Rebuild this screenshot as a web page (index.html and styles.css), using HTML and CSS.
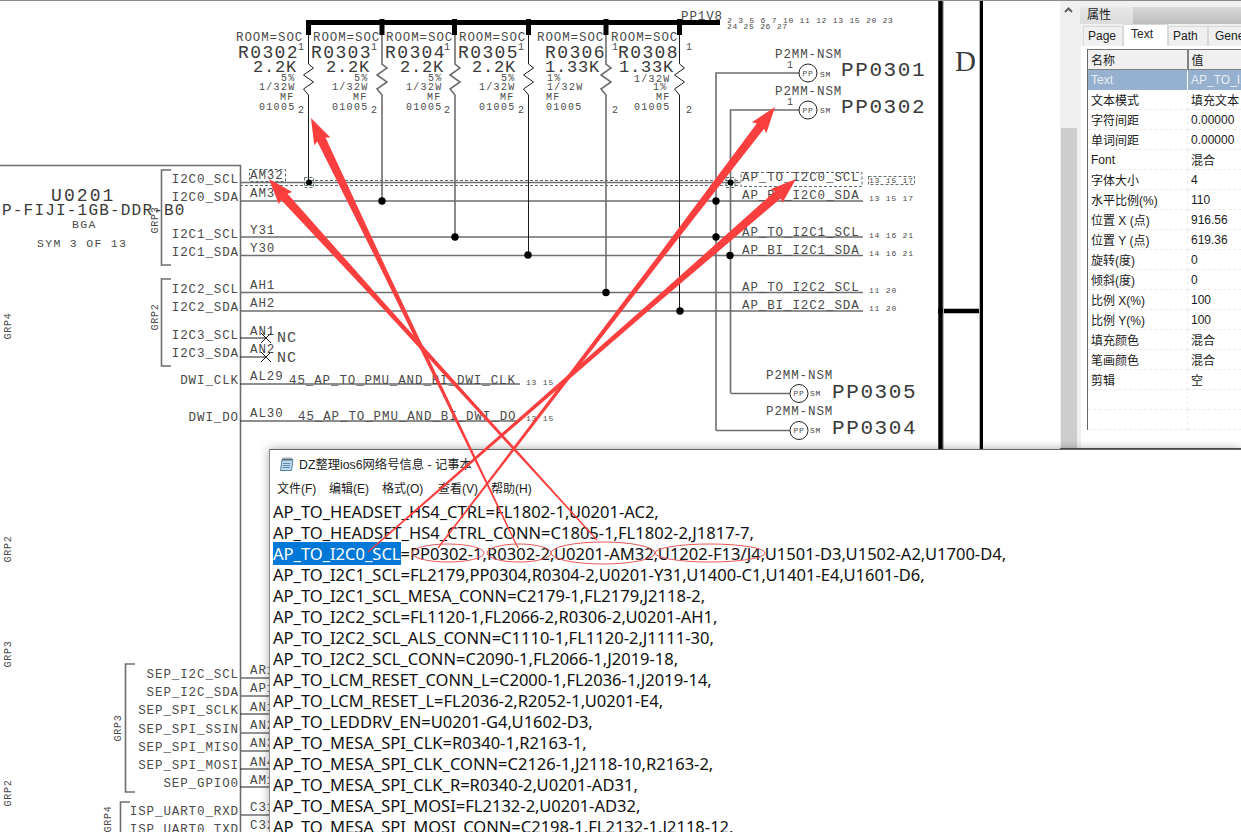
FILE: index.html
```html
<!DOCTYPE html>
<html lang="zh">
<head>
<meta charset="utf-8">
<title>DZ整理ios6网络号信息 - 记事本</title>
<link rel="stylesheet" href="styles.css">
</head>
<body>
<div class="page">
  <svg class="schematic" width="1060" height="832" viewBox="0 0 1060 832">
    <!-- symbol outline -->
    <path class="wire-g" d="M0 165.500H240.500V832"/>
    <path class="wire-g" d="M171 170H161.500V265H171M171 279H161.500V366H171M135 664H125.500V792H135M130 802H120.500V832"/>
    <!-- horizontal nets -->
    <path class="wire-g" d="M240 182.500H740M240 201H863M240 237H863M240 255.500H863M240 292.500H863M240 311H863"/>
    <path class="wire-k" d="M240 338H266M240 357H266M240 384H520M240 421H520"/>
    <path class="wire-g" d="M240 678H270M240 696H270M240 733H270M240 751H270M240 815H270"/>
    <path class="wire-k" d="M240 714H270M240 769H270M240 787H270"/>
    <path class="wire-k" d="M261 333l10 10m0-10l-10 10M261 352l10 10m0-10l-10 10"/>
    <!-- power bus -->
    <path class="bus" d="M306 22.500H720"/>
    <path class="stub" d="M308.500 20V35M382 19V35M454.500 19V35M528.500 19V35M606 19V35M679.500 19V35"/>
    <!-- resistors -->
    <path class="wire-k" d="M308.500 35V64l5 4-10 7 10 7-10 7 5 6V182"/>
    <path class="wire-g" d="M382 35V64l5 4-10 7 10 7-10 7 5 6V201"/>
    <path class="wire-g" d="M455 35V64l5 4-10 7 10 7-10 7 5 6V237"/>
    <path class="wire-k" d="M528.500 35V64l5 4-10 7 10 7-10 7 5 6V255"/>
    <path class="wire-g" d="M606 35V64l5 4-10 7 10 7-10 7 5 6V292"/>
    <path class="wire-k" d="M679.500 35V64l5 4-10 7 10 7-10 7 5 6V311"/>
    <!-- test point wiring -->
    <path class="wire-g" d="M716 430.500V73H799M730.500 393V110H799M730.500 393.500H790M716 430.500H790"/>
    <!-- junctions -->
    <circle class="dot" cx="382" cy="201" r="3.700"/>
    <circle class="dot" cx="455" cy="237" r="3.700"/>
    <circle class="dot" cx="528" cy="255" r="3.700"/>
    <circle class="dot" cx="606" cy="292.500" r="3.700"/>
    <circle class="dot" cx="680" cy="311" r="3.700"/>
    <circle class="dot" cx="716" cy="201" r="3.700"/>
    <circle class="dot" cx="716" cy="237" r="3.700"/>
    <circle class="dot" cx="730" cy="255.500" r="3.700"/>
    <!-- frame lines -->
    <path class="frame-a" d="M940.500 0V449M938 311H982"/>
    <path class="frame-b" d="M981.500 0V449"/>
    <path class="frame-s" d="M943.500 0V449M979.500 0V449"/>

    <!-- selection marks -->
    <rect class="sel" x="249.500" y="169.500" width="36" height="12"/>
    <path class="sel" d="M240 185.500H740M310 180.500H740"/>
    <rect class="sel" x="741" y="172.500" width="121" height="14"/>
    <rect class="sel" x="868.500" y="176.500" width="46" height="8"/>
    <rect class="sel" x="304.500" y="177.500" width="9" height="10"/>
    <rect class="sel" x="726" y="177.500" width="9" height="10"/>
    <circle class="dot" cx="309" cy="182.500" r="3"/>
    <circle class="dot" cx="730.500" cy="182.500" r="3"/>

    <!-- resistor text -->
    <g class="t t-pin">
      <text x="236" y="41">ROOM=SOC</text><text x="313" y="41">ROOM=SOC</text><text x="386" y="41">ROOM=SOC</text>
      <text x="459" y="41">ROOM=SOC</text><text x="537" y="41">ROOM=SOC</text><text x="611" y="41">ROOM=SOC</text>
    </g>
    <g class="t t-ref">
      <text x="238" y="58">R0302</text><text x="311" y="58">R0303</text><text x="385" y="58">R0304</text>
      <text x="458" y="58">R0305</text><text x="545" y="58">R0306</text><text x="618" y="58">R0308</text>
    </g>
    <g class="t t-val">
      <text x="253" y="72">2.2K</text><text x="326" y="72">2.2K</text><text x="400" y="72">2.2K</text>
      <text x="472" y="72">2.2K</text><text x="545" y="72">1.33K</text><text x="619" y="72">1.33K</text>
    </g>
    <g class="t t-sm">
      <text x="281" y="81">5%</text><text x="354" y="81">5%</text><text x="428" y="81">5%</text><text x="501" y="81">5%</text><text x="547" y="81">1%</text><text x="634" y="82">1/32W</text>
      <text x="259" y="90">1/32W</text><text x="332" y="90">1/32W</text><text x="406" y="90">1/32W</text><text x="479" y="90">1/32W</text><text x="547" y="90">1/32W</text><text x="653" y="90">1%</text>
      <text x="280" y="100">MF</text><text x="353" y="100">MF</text><text x="427" y="100">MF</text><text x="500" y="100">MF</text><text x="546" y="100">MF</text><text x="656" y="100">MF</text>
      <text x="259" y="110">01005</text><text x="332" y="110">01005</text><text x="406" y="110">01005</text><text x="479" y="110">01005</text><text x="546" y="110">01005</text><text x="634" y="110">01005</text>
      <text x="298" y="50">1</text><text x="371" y="50">1</text><text x="444" y="50">1</text><text x="518" y="50">1</text><text x="612" y="50">1</text><text x="686" y="50">1</text>
      <text x="298" y="113">2</text><text x="371" y="113">2</text><text x="444" y="113">2</text><text x="518" y="113">2</text><text x="612" y="113">2</text><text x="686" y="113">2</text>
    </g>
    <text class="t t-pin" x="681" y="20">PP1V8</text>
    <text class="t t-xs t-rail" x="727" y="23">2 3 5 6 7 10 11 12 13 15 20 23</text>
    <text class="t t-xs t-rail" x="727" y="29">24 25 26 27</text>

    <!-- symbol text -->
    <text class="t t-u" x="51" y="201">U0201</text>
    <text class="t t-part" x="2" y="215">P-FIJI-1GB-DDR-B0</text>
    <text class="t t-note" x="72" y="228">BGA</text>
    <text class="t t-note" x="37" y="247">SYM 3 OF 13</text>

    <g class="t t-grp">
      <text transform="translate(158 220) rotate(-90)">GRP3</text>
      <text transform="translate(158 317) rotate(-90)">GRP2</text>
      <text transform="translate(11 326) rotate(-90)">GRP4</text>
      <text transform="translate(11 549) rotate(-90)">GRP2</text>
      <text transform="translate(11 654) rotate(-90)">GRP3</text>
      <text transform="translate(11 793) rotate(-90)">GRP2</text>
      <text transform="translate(121 728) rotate(-90)">GRP3</text>
      <text transform="translate(111 819) rotate(-90)">GRP4</text>
    </g>

    <g class="t t-pin t-end">
      <text x="239" y="183">I2C0_SCL</text><text x="239" y="201">I2C0_SDA</text>
      <text x="239" y="238">I2C1_SCL</text><text x="239" y="256">I2C1_SDA</text>
      <text x="239" y="293">I2C2_SCL</text><text x="239" y="311">I2C2_SDA</text>
      <text x="239" y="339">I2C3_SCL</text><text x="239" y="357">I2C3_SDA</text>
      <text x="239" y="384">DWI_CLK</text><text x="239" y="421">DWI_DO</text>
      <text x="239" y="678">SEP_I2C_SCL</text><text x="239" y="696">SEP_I2C_SDA</text>
      <text x="239" y="714">SEP_SPI_SCLK</text><text x="239" y="733">SEP_SPI_SSIN</text>
      <text x="239" y="751">SEP_SPI_MISO</text><text x="239" y="769">SEP_SPI_MOSI</text>
      <text x="239" y="787">SEP_GPIO0</text>
      <text x="239" y="815">ISP_UART0_RXD</text><text x="239" y="833">ISP_UART0_TXD</text>
    </g>
    <g class="t t-pin">
      <text x="250" y="179">AM32</text><text x="250" y="197">AM31</text>
      <text x="250" y="234">Y31</text><text x="250" y="252">Y30</text>
      <text x="250" y="289">AH1</text><text x="250" y="307">AH2</text>
      <text x="250" y="335">AN1</text><text x="250" y="353">AN2</text>
      <text x="250" y="380">AL29</text><text x="250" y="417">AL30</text>
      <text x="250" y="674">AR1</text><text x="250" y="692">AP1</text><text x="250" y="711">AN1</text>
      <text x="250" y="729">AN2</text><text x="250" y="747">AN3</text><text x="250" y="766">AN4</text>
      <text x="250" y="784">AM1</text><text x="250" y="811">C31</text><text x="250" y="829">C32</text>
      <text x="289" y="384">45_AP_TO_PMU_AND_BI_DWI_CLK</text>
      <text x="298" y="420">45_AP_TO_PMU_AND_BI_DWI_DO</text>
      <text x="742" y="181">AP_TO_I2C0_SCL</text><text x="742" y="199">AP_BI_I2C0_SDA</text>
      <text x="742" y="236">AP_TO_I2C1_SCL</text><text x="742" y="254">AP_BI_I2C1_SDA</text>
      <text x="742" y="291">AP_TO_I2C2_SCL</text><text x="742" y="309">AP_BI_I2C2_SDA</text>
      <text x="775" y="58">P2MM-NSM</text><text x="775" y="95">P2MM-NSM</text>
      <text x="766" y="379">P2MM-NSM</text><text x="766" y="415">P2MM-NSM</text>
    </g>
    <g class="t t-nc"><text x="277" y="342">NC</text><text x="277" y="362">NC</text></g>
    <g class="t t-xs">
      <text x="869" y="183">13 15 17</text><text x="869" y="201">13 15 17</text>
      <text x="869" y="238">14 16 21</text><text x="869" y="256">14 16 21</text>
      <text x="869" y="293">11 20</text><text x="869" y="311">11 20</text>
      <text x="526" y="385">13 15</text><text x="526" y="421">13 15</text>
      <text x="820" y="77">SM</text><text x="820" y="113">SM</text><text x="810" y="396">SM</text><text x="810" y="433">SM</text>
    </g>
    <g class="t t-sm"><text x="787" y="68">1</text><text x="787" y="105">1</text></g>

    <!-- test points -->
    <g class="tp">
      <circle cx="808" cy="73" r="9"/><circle cx="808" cy="110" r="9"/><circle cx="799" cy="393.500" r="9"/><circle cx="799" cy="430.500" r="9"/>
    </g>
    <g class="t t-xs t-mid">
      <text x="808" y="76">PP</text><text x="808" y="113">PP</text><text x="799" y="396">PP</text><text x="799" y="433">PP</text>
    </g>
    <g class="t t-pp">
      <text x="841" y="76">PP0301</text><text x="841" y="113">PP0302</text>
      <text x="832" y="398">PP0305</text><text x="832" y="434">PP0304</text>
    </g>
    <text class="t-zone" x="955" y="71">D</text>
  </svg>

  <aside class="panel">
    <div class="scrollbar">
      <div class="scroll-track"><svg class="scroll-arrow" width="9" height="6" viewBox="0 0 9 6"><path d="M1 5L4.500 1.500 8 5"/></svg></div>
      <div class="scroll-thumb"></div>
    </div>
    <div class="props">
      <div class="props-title"><span class="props-label">属性</span></div>
      <div class="tabs">
        <span class="tab">Page</span>
        <span class="tab tab-active">Text</span>
        <span class="tab">Path</span>
        <span class="tab tab-last">General</span>
      </div>
      <div class="props-body">
        <table class="grid">
          <thead><tr><th>名称</th><th>值</th></tr></thead>
          <tbody>
            <tr class="row-sel"><td>Text</td><td>AP_TO_I2C0_SCL</td></tr>
            <tr><td>文本模式</td><td>填充文本</td></tr>
            <tr><td>字符间距</td><td>0.00000</td></tr>
            <tr><td>单词间距</td><td>0.00000</td></tr>
            <tr><td>Font</td><td>混合</td></tr>
            <tr><td>字体大小</td><td>4</td></tr>
            <tr><td>水平比例(%)</td><td>110</td></tr>
            <tr><td>位置 X (点)</td><td>916.56</td></tr>
            <tr><td>位置 Y (点)</td><td>619.36</td></tr>
            <tr><td>旋转(度)</td><td>0</td></tr>
            <tr><td>倾斜(度)</td><td>0</td></tr>
            <tr><td>比例 X(%)</td><td>100</td></tr>
            <tr><td>比例 Y(%)</td><td>100</td></tr>
            <tr><td>填充颜色</td><td>混合</td></tr>
            <tr><td>笔画颜色</td><td>混合</td></tr>
            <tr><td>剪辑</td><td>空</td></tr>
            <tr><td></td><td></td></tr>
            <tr><td></td><td></td></tr>
          </tbody>
        </table>
      </div>
    </div>
  </aside>

  <section class="notepad">
    <header class="np-title">
      <svg class="np-icon" width="16" height="16" viewBox="0 0 16 16">
        <path class="np-icon-page" d="M3 3.500H14L12.500 14.500H1.500Z"/>
        <path class="np-icon-ring" d="M4 1.500V5M6 1.500V5M8 1.500V5M10 1.500V5M12 1.500V5"/>
        <path class="np-icon-line" d="M4 7.500H11.500M3.700 9.500H11.200M3.400 11.500H11"/>
      </svg>
      <span>DZ整理ios6网络号信息 - 记事本</span>
    </header>
    <nav class="np-menu">
      <span>文件(F)</span><span>编辑(E)</span><span>格式(O)</span><span>查看(V)</span><span>帮助(H)</span>
    </nav>
    <div class="np-text">
      <div>AP_TO_HEADSET_HS4_CTRL=FL1802-1,U0201-AC2,</div>
      <div>AP_TO_HEADSET_HS4_CTRL_CONN=C1805-1,FL1802-2,J1817-7,</div>
      <div><span class="np-sel">AP_TO_I2C0_SCL</span>=PP0302-1,R0302-2,U0201-AM32,U1202-F13/J4,U1501-D3,U1502-A2,U1700-D4,</div>
      <div>AP_TO_I2C1_SCL=FL2179,PP0304,R0304-2,U0201-Y31,U1400-C1,U1401-E4,U1601-D6,</div>
      <div>AP_TO_I2C1_SCL_MESA_CONN=C2179-1,FL2179,J2118-2,</div>
      <div>AP_TO_I2C2_SCL=FL1120-1,FL2066-2,R0306-2,U0201-AH1,</div>
      <div>AP_TO_I2C2_SCL_ALS_CONN=C1110-1,FL1120-2,J1111-30,</div>
      <div>AP_TO_I2C2_SCL_CONN=C2090-1,FL2066-1,J2019-18,</div>
      <div>AP_TO_LCM_RESET_CONN_L=C2000-1,FL2036-1,J2019-14,</div>
      <div>AP_TO_LCM_RESET_L=FL2036-2,R2052-1,U0201-E4,</div>
      <div>AP_TO_LEDDRV_EN=U0201-G4,U1602-D3,</div>
      <div>AP_TO_MESA_SPI_CLK=R0340-1,R2163-1,</div>
      <div>AP_TO_MESA_SPI_CLK_CONN=C2126-1,J2118-10,R2163-2,</div>
      <div>AP_TO_MESA_SPI_CLK_R=R0340-2,U0201-AD31,</div>
      <div>AP_TO_MESA_SPI_MOSI=FL2132-2,U0201-AD32,</div>
      <div>AP_TO_MESA_SPI_MOSI_CONN=C2198-1,FL2132-1,J2118-12,</div>
    </div>
  </section>

  <svg class="marks" width="1241" height="832" viewBox="0 0 1241 832">
    <polygon points="311,118 330.400,137.500 325.500,137.600 387,270.200 518.500,547.700 517.500,548.300 382.600,272.200 317.300,141.600 314.200,145.300"/>
    <polygon points="269,179 292.200,192.100 287.500,193.700 384.400,303 597.400,539.600 596.600,540.400 380.800,306.200 280.900,199.700 278.800,204.300"/>
    <polygon points="775,107 766.400,133.200 764,128.800 661.800,259.600 438.500,548.400 437.500,547.600 657.600,256.400 756.800,123.400 752,122.200"/>
    <polygon points="796,179 782.300,202.900 780.900,198.200 654.400,305.800 368.400,552.500 367.600,551.500 651,301.800 774.900,191.400 770.500,189.300"/>
    <ellipse cx="448" cy="553" rx="36" ry="9"/>
    <ellipse cx="519" cy="553" rx="32" ry="9"/>
    <ellipse cx="603" cy="553" rx="52" ry="11"/>
    <ellipse cx="710" cy="553" rx="55" ry="9"/>
  </svg>
</div>
</body>
</html>
```

FILE: styles.css
```css
* { box-sizing: border-box; }
html, body { margin: 0; padding: 0; background: #fff; }
.page {
  position: relative;
  display: flex;
  align-items: flex-start;
  width: 1241px;
  height: 832px;
  overflow: hidden;
  border-top: 1px solid #8a8a8a;
  font-family: "Liberation Sans", "Noto Sans CJK SC", sans-serif;
}

/* schematic canvas */
.schematic { display: block; flex: none; margin-top: -1px; }
.schematic path, .schematic rect { fill: none; }
.wire-g { stroke: #6e6e6e; stroke-width: 1.6; }
.wire-k { stroke: #1c1c1c; stroke-width: 1; }
.bus { stroke: #000; stroke-width: 5; }
.stub { stroke: #000; stroke-width: 5; }
.dot { fill: #000; }
.frame-a { stroke: #000; stroke-width: 4.500; }
.frame-b { stroke: #000; stroke-width: 3; }
.frame-s { stroke: #b5b5b5; stroke-width: 1; }
.sel { stroke: #5c6f6a; stroke-width: 1; stroke-dasharray: 3 2; }
.tp circle { fill: #fff; stroke: #222; stroke-width: 1; }

.t { font-family: "Liberation Mono", monospace; fill: #4a4a4a; }
.t-pin { font-size: 12.500px; letter-spacing: 0.900px; }
.t-end { text-anchor: end; }
.t-ref { font-size: 18px; letter-spacing: 1.400px; fill: #3a3a3a; }
.t-val { font-size: 17px; letter-spacing: 0.800px; fill: #3a3a3a; }
.t-sm { font-size: 10px; letter-spacing: 1.300px; }
.t-xs { font-size: 8px; letter-spacing: 0.800px; }
.t-rail { letter-spacing: 0.600px; word-spacing: 0.400px; }
.t-mid { text-anchor: middle; }
.t-pp { font-size: 21px; letter-spacing: 1.600px; fill: #3a3a3a; }
.t-u { font-size: 18px; letter-spacing: 2.100px; fill: #3a3a3a; }
.t-part { font-size: 16px; letter-spacing: 1.200px; fill: #3a3a3a; }
.t-note { font-size: 11.500px; letter-spacing: 1.300px; }
.t-grp { font-size: 10px; letter-spacing: 0.700px; text-anchor: middle; }
.t-nc { font-size: 15px; letter-spacing: 1px; }
.t-zone { font-family: "Liberation Serif", serif; font-size: 29px; fill: #3a3a3a; }

/* properties panel */
.panel {
  flex: none;
  display: flex;
  width: 181px;
  height: 448px;
  border-bottom: 1px solid #555;
  background: #f0f0f0;
  font-size: 12px;
  color: #1a1a1a;
}
.scrollbar { flex: none; display: flex; flex-direction: column; width: 16px; margin-left: 1px; }
.scroll-track { height: 127px; background: #f0f0f0; padding: 6px 0 0 3px; }
.scroll-arrow { display: block; }
.scroll-arrow path { fill: none; stroke: #606060; stroke-width: 2; }
.scroll-thumb { flex: 1; background: #cdcdcd; }
.props { flex: 1; min-width: 0; display: flex; flex-direction: column; margin-left: 3px; overflow: hidden; }
.props-title {
  margin-top: 6px;
  height: 17px;
  background: linear-gradient(#d8d8d8, #bdbdbd);
  flex: none;
}
.props-label {
  display: block;
  width: 53px;
  height: 17px;
  padding-left: 7px;
  line-height: 17px;
  font-size: 12px;
  background: linear-gradient(#e8e8e8, #dcdcdc);
}
.tabs { flex: none; display: flex; align-items: flex-end; height: 22px; padding-left: 3px; }
.tab {
  flex: none;
  height: 20px;
  line-height: 19px;
  width: 40px;
  padding-left: 4px;
  background: #f0f0f0;
  border: 1px solid #d9d9d9;
  border-bottom: 0;
  color: #222;
}
.tab-active { width: 45px; height: 22px; line-height: 18px; padding-left: 7px; background: #fff; }
.tab-last { width: 60px; padding-left: 6px; }
.props-body { flex: 1; min-height: 0; background: #fff; padding: 3px 0 0 6px; margin-left: 1px; overflow: hidden; }
.grid {
  width: 154px;
  table-layout: fixed;
  border-collapse: collapse;
  border-left: 1px solid #666;
  border-top: 1px solid #777;
  font-size: 12px;
}
.grid th {
  height: 20px;
  padding: 0 0 0 3px;
  font-weight: normal;
  text-align: left;
  background: #f0f0f0;
  border-right: 2px solid #808080;
  border-bottom: 1px solid #808080;
  white-space: nowrap;
  overflow: hidden;
}
.grid th:first-child { width: 100px; }
.grid th:last-child { border-right: 0; }
.grid td {
  height: 20px;
  padding: 0 0 0 3px;
  border-bottom: 1px dashed #ebebeb;
  border-right: 1px dashed #ebebeb;
  white-space: nowrap;
  overflow: hidden;
}
.grid td:last-child { border-right: 0; }
.row-sel td { background: #96b0cf; color: #e8eef5; border-right: 1px solid #fff; border-bottom: 0; }

/* notepad window */
.notepad {
  position: absolute;
  left: 269px;
  top: 448px;
  right: 0;
  bottom: 0;
  display: flex;
  flex-direction: column;
  background: #fff;
  border-top: 1px solid #666;
  border-left: 1px solid #8a8a8a;
  box-shadow: 0 0 9px rgba(0, 0, 0, 0.35);
  color: #111;
}
.np-title { flex: none; display: flex; align-items: center; gap: 4px; height: 27px; padding-left: 9px; font-size: 12.300px; color: #222; }
.np-icon { flex: none; }
.np-icon-page { fill: #bcd9ee; stroke: #55819f; stroke-width: 1; }
.np-icon-ring { fill: none; stroke: #51606c; stroke-width: 1; }
.np-icon-line { fill: none; stroke: #5e8db0; stroke-width: 1; }
.np-menu { flex: none; display: flex; height: 23px; padding-left: 7px; line-height: 24px; font-size: 12px; color: #1a1a1a; }
.np-menu span { width: 53px; white-space: nowrap; }
.np-menu span:first-child { width: 52px; }
.np-menu span:nth-child(3) { width: 56px; }
.np-text { padding: 1px 0 0 3px; font-family: "Noto Sans", "Liberation Sans", sans-serif; font-size: 16.550px; line-height: 21px; white-space: nowrap; overflow: hidden; }
.np-sel { background: #0078d7; color: #fff; }

/* hand-drawn red annotations over everything */
.marks { position: absolute; left: 0; top: -1px; pointer-events: none; }
.marks polygon { fill: #fb3f3f; }
.marks ellipse { fill: none; stroke: #e8585a; stroke-width: 1; }
```
